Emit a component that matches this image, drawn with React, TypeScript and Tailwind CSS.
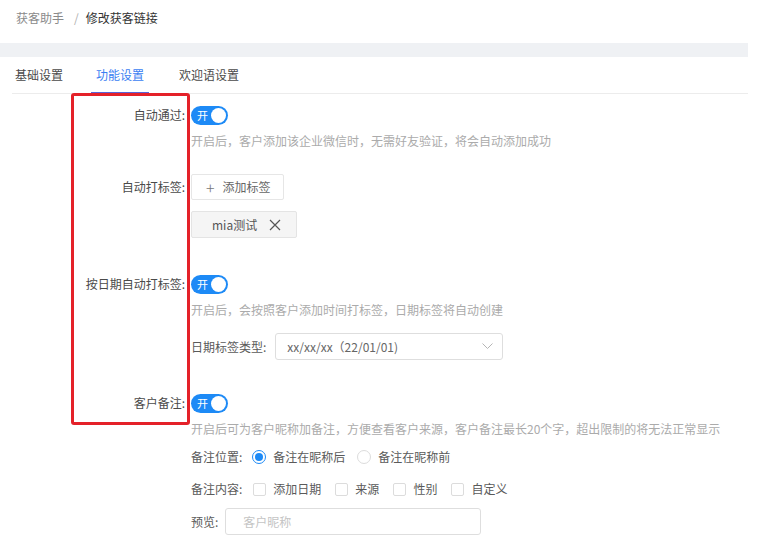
const font = { fontFamily: '"Noto Sans CJK SC", "Noto Sans", sans-serif' };

function Toggle() {
  return (
    <div className="flex h-[19px] w-[37px] items-center justify-between rounded-full bg-[#1d8af6] pl-[6px] pr-[2px]">
      <span className="text-[11px] leading-none text-white">开</span>
      <span className="h-[15px] w-[15px] rounded-full bg-white" />
    </div>
  );
}

function Label({ text }: { text: string }) {
  return <div className="w-[185px] shrink-0 text-right text-[#4a4a4a]">{text}:</div>;
}

function Desc({ text }: { text: string }) {
  return <div className="ml-[191px] mt-[6px] leading-[20px] text-[#ababab]">{text}</div>;
}

function Radio({ checked, label }: { checked?: boolean; label: string }) {
  return (
    <div className="flex items-center gap-[7px]">
      <span
        className={
          checked
            ? "flex h-[14px] w-[14px] items-center justify-center rounded-full border border-[#1d8af6]"
            : "h-[14px] w-[14px] rounded-full border border-[#dcdcdc]"
        }
      >
        {checked && <span className="h-[8px] w-[8px] rounded-full bg-[#1d8af6]" />}
      </span>
      <span className="text-[#5a5a5a]">{label}</span>
    </div>
  );
}

function Box({ label }: { label: string }) {
  return (
    <div className="flex items-center gap-[7px]">
      <span className="h-[13px] w-[13px] rounded-[2px] border border-[#dcdcdc] bg-white" />
      <span className="text-[#5a5a5a]">{label}</span>
    </div>
  );
}

export default function App() {
  return (
    <div className="relative h-[546px] w-[764px] overflow-hidden bg-white text-[12px] leading-[20px]" style={font}>
      {/* Breadcrumb */}
      <div className="flex h-[43px] items-start pl-[16px] pt-[8px]">
        <span className="text-[#8a8a8a]">获客助手</span>
        <span className="ml-[10px] text-[#b0b0b0]">/</span>
        <span className="ml-[7px] text-[#333]">修改获客链接</span>
      </div>
      <div className="h-[14px] w-[748px] bg-[#eff1f4]" />

      {/* Tabs */}
      <div className="ml-[12px] flex h-[37px] w-[736px] gap-[25px] border-b border-[#ececec]">
        <div className="flex h-[36px] items-center px-[3px] text-[#4a4a4a]">基础设置</div>
        <div className="relative flex h-[36px] items-center px-[5px] text-[#3b7ef2]">
          功能设置
          <span className="absolute bottom-[-1px] left-0 h-[2px] w-full bg-[#5a63d6]" />
        </div>
        <div className="flex h-[36px] items-center px-[5px] text-[#4a4a4a]">欢迎语设置</div>
      </div>

      {/* 自动通过 */}
      <div className="mt-[11px] flex items-center gap-[6px]">
        <Label text="自动通过" />
        <Toggle />
      </div>
      <Desc text="开启后，客户添加该企业微信时，无需好友验证，将会自动添加成功" />

      {/* 自动打标签 */}
      <div className="mt-[23px] flex items-center gap-[6px]">
        <Label text="自动打标签" />
        <div className="flex h-[26px] w-[93px] items-center gap-[8px] rounded-[2px] border border-[#e6e6e6] pl-[14px] text-[#666]">
          <span className="text-[16px] font-light leading-none text-[#777]">+</span>
          <span>添加标签</span>
        </div>
      </div>
      <div className="ml-[191px] mt-[11px] flex h-[27px] w-[106px] items-center gap-[12px] rounded-[2px] border border-[#e4e4e4] bg-[#f5f5f5] pl-[20px] text-[#555]">
        <span>mia测试</span>
        <svg width="12" height="12" viewBox="0 0 12 12" className="text-[#555]">
          <path d="M1 1L11 11M11 1L1 11" stroke="currentColor" strokeWidth="1.2" />
        </svg>
      </div>

      {/* 按日期自动打标签 */}
      <div className="mt-[36px] flex items-center gap-[6px]">
        <Label text="按日期自动打标签" />
        <Toggle />
      </div>
      <Desc text="开启后，会按照客户添加时间打标签，日期标签将自动创建" />
      <div className="ml-[191px] mt-[13px] flex items-center gap-[9px]">
        <span className="text-[#5a5a5a]">日期标签类型:</span>
        <div className="flex h-[27px] w-[228px] items-center justify-between rounded-[3px] border border-[#dedede] pl-[11px] pr-[9px] text-[#666]">
          <span>xx/xx/xx（22/01/01)</span>
          <svg width="11" height="7" viewBox="0 0 11 7">
            <path d="M0.5 0.5L5.5 5.5L10.5 0.5" fill="none" stroke="#b5b5b5" strokeWidth="1" />
          </svg>
        </div>
      </div>

      {/* 客户备注 */}
      <div className="mt-[33px] flex items-center gap-[6px]">
        <Label text="客户备注" />
        <Toggle />
      </div>
      <Desc text="开启后可为客户昵称加备注，方便查看客户来源，客户备注最长20个字，超出限制的将无法正常显示" />
      <div className="ml-[191px] mt-[8px] flex items-center">
        <span className="mr-[10px] text-[#5a5a5a]">备注位置:</span>
        <div className="flex items-center gap-[12px]">
          <Radio checked label="备注在昵称后" />
          <Radio label="备注在昵称前" />
        </div>
      </div>
      <div className="ml-[191px] mt-[12px] flex items-center">
        <span className="mr-[11px] text-[#5a5a5a]">备注内容:</span>
        <div className="flex items-center gap-[14px]">
          <Box label="添加日期" />
          <Box label="来源" />
          <Box label="性别" />
          <Box label="自定义" />
        </div>
      </div>
      <div className="ml-[191px] mt-[9px] flex items-center gap-[7px]">
        <span className="text-[#5a5a5a]">预览:</span>
        <div className="flex h-[27px] w-[256px] items-center rounded-[3px] border border-[#dedede] pl-[17px] text-[#c4c4c4]">
          客户昵称
        </div>
      </div>

      {/* Annotation box */}
      <div className="absolute left-[71px] top-[93px] h-[332px] w-[119px] rounded-[3px] border-[3px] border-[#e42129]" />
    </div>
  );
}
